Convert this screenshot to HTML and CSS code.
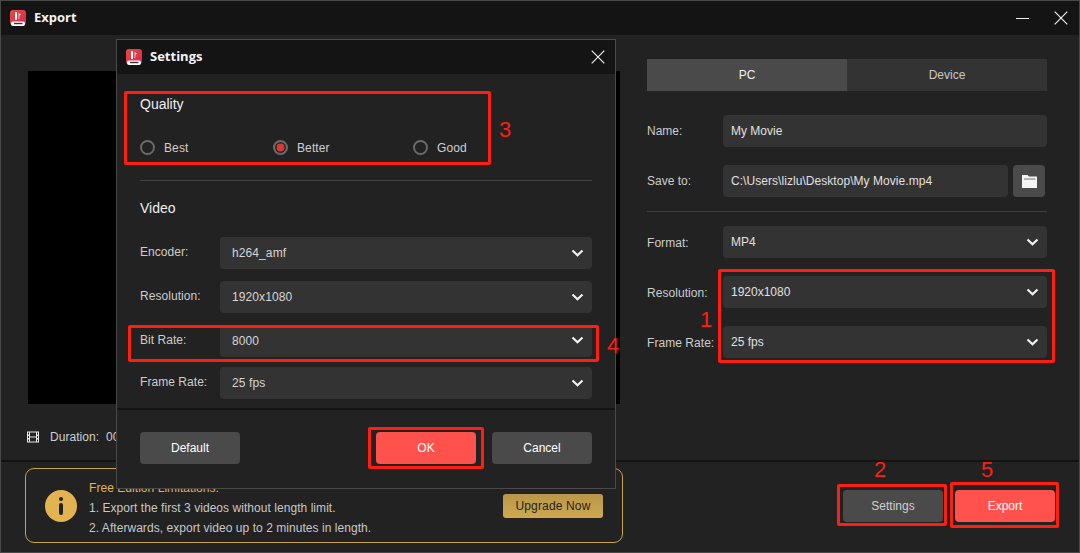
FILE: index.html
```html
<!DOCTYPE html>
<html lang="en">
<head>
<meta charset="utf-8">
<title>Export</title>
<link rel="stylesheet" href="styles.css">
</head>
<body>
<svg class="defs" width="0" height="0" aria-hidden="true">
  <defs>
    <linearGradient id="lg" x1="0" y1="0" x2="1" y2="1">
      <stop offset="0" stop-color="#ea4a3f"/>
      <stop offset="1" stop-color="#d42a55"/>
    </linearGradient>
    <symbol id="logo" viewBox="0 0 16 16">
      <rect x="0" y="0" width="16" height="15" rx="3" fill="url(#lg)"/>
      <path d="M5 2h2v8H5z" fill="#fff"/>
      <path d="M8.500 3l2.600 1.400-1.600 1-.2 3.600H8.500z" fill="#f7c9cc"/>
      <rect x="1" y="11.500" width="14" height="4.500" rx="2" fill="#fff"/>
      <path d="M4 12.800h8.500v1.400H4z" fill="#33343a"/>
    </symbol>
    <symbol id="chev" viewBox="0 0 13 8">
      <path d="M1.500 1.500 6.500 6.200 11.500 1.500" fill="none" stroke="currentColor" stroke-width="2.200"/>
    </symbol>
    <symbol id="x" viewBox="0 0 14 14">
      <path d="M.7.7 13.300 13.300M13.300.7.7 13.300" fill="none" stroke="currentColor" stroke-width="1.200"/>
    </symbol>
  </defs>
</svg>

<div class="window">
  <header class="titlebar">
    <svg class="logo"><use href="#logo"/></svg>
    <span class="title">Export</span>
    <div class="win-controls">
      <span class="min"></span>
      <svg class="x-icon"><use href="#x"/></svg>
    </div>
  </header>

  <main class="main">
    <section class="preview-col">
      <div class="preview"></div>
      <div class="duration">
        <svg class="film" viewBox="0 0 12 12">
          <path fill="#e6e6e6" fill-rule="evenodd" d="M0 .5h12v11H0zM1 1.500v2h1v-2zM1 5v2h1V5zM1 8.500v2h1v-2zM10 1.500v2h1v-2zM10 5v2h1V5zM10 8.500v2h1v-2zM3 1.500v4h6v-4zM3 6.500v4h6v-4z"/>
        </svg>
        <span>Duration:&nbsp; 00:00:20</span>
      </div>
    </section>

    <section class="panel">
      <div class="tabs">
        <div class="tab tab-active">PC</div>
        <div class="tab">Device</div>
      </div>
      <div class="field field-name">
        <label class="field-label">Name:</label>
        <div class="box">My Movie</div>
      </div>
      <div class="field field-save">
        <label class="field-label">Save to:</label>
        <div class="box box-path">C:\Users\lizlu\Desktop\My Movie.mp4</div>
        <button class="folder-btn" type="button" aria-label="Browse">
          <svg viewBox="0 0 15 13" width="15" height="13"><path fill="#f4f4f4" d="M0 0h5.500L7 1.500h8V13H0z"/><path fill="#777" d="M2 3.500h11.500v1H2z"/></svg>
        </button>
      </div>
      <div class="panel-rule"></div>
      <div class="field">
        <label class="field-label label-low">Format:</label>
        <div class="box box-select">MP4<svg class="chev"><use href="#chev"/></svg></div>
      </div>
      <div class="field field-res">
        <label class="field-label label-low">Resolution:</label>
        <div class="box box-select">1920x1080<svg class="chev"><use href="#chev"/></svg></div>
      </div>
      <div class="field field-res">
        <label class="field-label label-low">Frame Rate:</label>
        <div class="box box-select">25 fps<svg class="chev"><use href="#chev"/></svg></div>
      </div>
    </section>
  </main>

  <footer class="footer">
    <div class="notice">
      <div class="info-icon"><span class="info-dot"></span><span class="info-bar"></span></div>
      <div class="notice-text">
        <div class="notice-head">Free Edition Limitations:</div>
        <div>1. Export the first 3 videos without length limit.</div>
        <div>2. Afterwards, export video up to 2 minutes in length.</div>
      </div>
      <button class="upgrade" type="button">Upgrade Now</button>
    </div>
    <div class="footer-actions">
      <button class="btn btn-grey btn-dim" type="button">Settings</button>
      <button class="btn btn-red" type="button">Export</button>
    </div>
  </footer>
</div>

<div class="dialog">
  <header class="dlg-title">
    <svg class="logo"><use href="#logo"/></svg>
    <span class="title">Settings</span>
    <svg class="x-icon dlg-x"><use href="#x"/></svg>
  </header>
  <div class="dlg-body">
    <h2 class="dlg-h quality-h">Quality</h2>
    <div class="radios">
      <div class="radio-item"><span class="radio"></span><span class="radio-text">Best</span></div>
      <div class="radio-item"><span class="radio radio-on"></span><span class="radio-text">Better</span></div>
      <div class="radio-item"><span class="radio"></span><span class="radio-text">Good</span></div>
    </div>
    <div class="dlg-rule"></div>
    <h2 class="dlg-h video-h">Video</h2>
    <div class="dlg-rows">
      <div class="dlg-row"><label class="dlg-label">Encoder:</label><div class="box box-select dlg-box">h264_amf<svg class="chev"><use href="#chev"/></svg></div></div>
      <div class="dlg-row"><label class="dlg-label">Resolution:</label><div class="box box-select dlg-box">1920x1080<svg class="chev"><use href="#chev"/></svg></div></div>
      <div class="dlg-row"><label class="dlg-label">Bit Rate:</label><div class="box box-select dlg-box">8000<svg class="chev chev-up"><use href="#chev"/></svg></div></div>
      <div class="dlg-row dlg-row-last"><label class="dlg-label">Frame Rate:</label><div class="box box-select dlg-box">25 fps<svg class="chev"><use href="#chev"/></svg></div></div>
    </div>
  </div>
  <div class="dlg-foot">
    <button class="btn btn-grey" type="button">Default</button>
    <div class="dlg-foot-right">
      <button class="btn btn-red" type="button">OK</button>
      <button class="btn btn-grey" type="button">Cancel</button>
    </div>
  </div>
</div>

<div class="mark mark-quality"></div>
<div class="mark mark-bitrate"></div>
<div class="mark mark-ok"></div>
<div class="mark mark-res"></div>
<div class="mark mark-settings"></div>
<div class="mark mark-export"></div>
<span class="num num-3">3</span>
<span class="num num-4">4</span>
<span class="num num-1">1</span>
<span class="num num-2">2</span>
<span class="num num-5">5</span>
</body>
</html>
```
FILE: styles.css
```css
* { box-sizing: border-box; }
html, body { margin: 0; padding: 0; }
body {
  width: 1080px;
  height: 553px;
  overflow: hidden;
  position: relative;
  background: #222;
  font-family: "Liberation Sans", Arial, sans-serif;
  font-size: 12px;
  color: #d2d2d2;
}
.defs { position: absolute; }
button { font-family: inherit; border: 0; padding: 0; }

.window {
  width: 1080px;
  height: 553px;
  border: 1px solid #484848;
  display: flex;
  flex-direction: column;
  background: #222;
}
.titlebar {
  height: 34px;
  flex: none;
  background: #141414;
  display: flex;
  align-items: center;
  padding-left: 9px;
}
.logo { width: 16px; height: 16px; flex: none; }
.title {
  font-family: "Open Sans", sans-serif;
  font-weight: 700;
  font-size: 13px;
  color: #f4f4f4;
  margin: -2px 0 0 8px;
}
.win-controls {
  margin-left: auto;
  display: flex;
  align-items: center;
  gap: 25px;
  padding-right: 11px;
  color: #eee;
}
.min { display: block; width: 13px; height: 1px; background: #f0f0f0; margin-top: 1px; }
.x-icon { width: 14px; height: 14px; display: block; color: #eee; }

.main { height: 425px; flex: none; display: flex; }
.preview-col { width: 619px; flex: none; padding: 36px 0 0 26px; }
.preview { height: 333px; margin-left: 1px; background: #000; }
.duration {
  display: flex;
  align-items: center;
  gap: 11px;
  margin-top: 26px;
  height: 14px;
  color: #cfcfcf;
  letter-spacing: .05px;
}
.film { width: 12px; height: 12px; flex: none; }

.panel { width: 400px; margin-left: 27px; padding-top: 24px; }
.tabs { display: flex; height: 32px; }
.tab {
  flex: 1;
  background: #333;
  display: flex;
  align-items: center;
  justify-content: center;
  color: #c8c8c8;
}
.tab-active { background: #4a4a4a; color: #f0f0f0; }
.field { display: flex; align-items: center; height: 32px; }
.field-label { width: 76px; flex: none; color: #cdcdcd; }
.label-low { margin-top: 2px; letter-spacing: .05px; }
.field-name { margin-top: 24px; }
.field-save { margin-top: 18px; }
.field-res { margin-top: 18px; }
.box {
  flex: 1;
  height: 32px;
  background: #333;
  border-radius: 4px;
  display: flex;
  align-items: center;
  padding-left: 8px;
  color: #e0e0e0;
}
.box-path { flex: none; width: 285px; letter-spacing: .05px; }
.folder-btn {
  width: 32px;
  height: 32px;
  margin-left: 5px;
  background: #4a4a4a;
  border-radius: 4px;
  display: flex;
  align-items: center;
  justify-content: center;
}
.panel-rule { height: 1px; background: #3e3e3e; margin: 14px 0; }
.box-select { justify-content: space-between; padding-right: 8px; }
.chev { width: 13px; height: 8px; color: #f2f2f2; flex: none; }
.chev-up { margin-top: -3px; }

.footer {
  height: 91px;
  flex: none;
  border-top: 2px solid #141414;
  display: flex;
  padding: 6px 24px 0 24px;
}
.notice {
  width: 598px;
  height: 75px;
  border: 1px solid #c9a24a;
  border-radius: 9px;
  display: flex;
  align-items: center;
  padding: 0 19px;
}
.info-icon {
  width: 32px;
  height: 32px;
  border-radius: 50%;
  background: #e3b34f;
  flex: none;
  display: flex;
  flex-direction: column;
  align-items: center;
  justify-content: center;
  gap: 2px;
}
.info-dot { width: 4px; height: 4px; border-radius: 50%; background: #222; }
.info-bar { width: 4px; height: 12px; border-radius: 2px; background: #222; }
.notice-text { margin: 4px 0 0 12px; line-height: 20px; color: #c8c8c8; letter-spacing: .05px; }
.notice-head { color: #e3b34f; }
.upgrade {
  margin-left: auto;
  width: 100px;
  height: 24px;
  border-radius: 3px;
  background: linear-gradient(#b8964a, #cfa94f);
  color: #232323;
  font-size: 12px;
  letter-spacing: .15px;
}
.footer-actions { margin-left: auto; display: flex; gap: 12px; padding-top: 22px; }
.btn {
  width: 100px;
  height: 32px;
  border-radius: 4px;
  font-size: 12px;
  color: #fff;
}
.btn-grey { background: #4a4a4a; }
.btn-dim { color: #cfcfcf; }
.btn-red { background: #ff524d; }

.dialog {
  position: absolute;
  left: 116px;
  top: 39px;
  width: 500px;
  height: 450px;
  border: 1px solid #4a4a4a;
  background: #222;
  display: flex;
  flex-direction: column;
}
.dlg-title {
  height: 34px;
  flex: none;
  background: #141414;
  display: flex;
  align-items: center;
  padding: 0 10px 0 9px;
}
.dlg-x { margin-left: auto; }
.dlg-body { padding: 22px 23px 0; }
.dlg-h { margin: 0; font-size: 14px; font-weight: 400; line-height: 16px; color: #eee; }
.radios {
  display: grid;
  grid-template-columns: 133px 140px auto;
  margin-top: 27px;
  height: 16px;
}
.radio-item { display: flex; align-items: center; gap: 9px; color: #cfcfcf; }
.radio-text { margin-top: 1px; letter-spacing: .1px; }
.radio {
  width: 15px;
  height: 15px;
  border: 2px solid #6a6a6a;
  border-radius: 50%;
  flex: none;
}
.radio-on { position: relative; background: #d33a36; box-shadow: inset 0 0 0 1.500px #222; }
.dlg-rule { height: 1px; background: #444; margin-top: 25px; }
.video-h { margin-top: 19px; }
.dlg-rows { margin-top: 21px; display: flex; flex-direction: column; gap: 12px; }
.dlg-row { display: flex; height: 32px; align-items: center; }
.dlg-row-last { margin-top: -2px; }
.dlg-row-last .dlg-label { margin-top: -3px; }
.dlg-label { width: 80px; flex: none; color: #cdcdcd; margin-top: -2px; letter-spacing: .05px; }
.dlg-box { padding-left: 12px; padding-right: 8px; color: #d6d6d6; letter-spacing: .1px; }
.dlg-foot {
  margin-top: 9px;
  border-top: 2px solid #141414;
  padding: 22px 23px 0;
  display: flex;
  justify-content: space-between;
}
.dlg-foot-right { display: flex; gap: 16px; }

.mark {
  position: absolute;
  border: 3px solid #ff1e12;
  border-radius: 2px;
  pointer-events: none;
}
.mark-quality { left: 124px; top: 91px; width: 367px; height: 74px; }
.mark-bitrate { left: 128px; top: 325px; width: 471px; height: 37px; }
.mark-ok { left: 368px; top: 427px; width: 116px; height: 42px; }
.mark-res { left: 718px; top: 269px; width: 337px; height: 94px; }
.mark-settings { left: 837px; top: 484px; width: 110px; height: 42px; }
.mark-export { left: 950px; top: 482px; width: 109px; height: 46px; }
.num {
  position: absolute;
  color: #ff1e12;
  font-size: 22px;
  line-height: 24px;
}
.num-3 { left: 499px; top: 118px; }
.num-4 { left: 607px; top: 334px; }
.num-1 { left: 700px; top: 308px; }
.num-2 { left: 874px; top: 458px; }
.num-5 { left: 981px; top: 458px; }
```
